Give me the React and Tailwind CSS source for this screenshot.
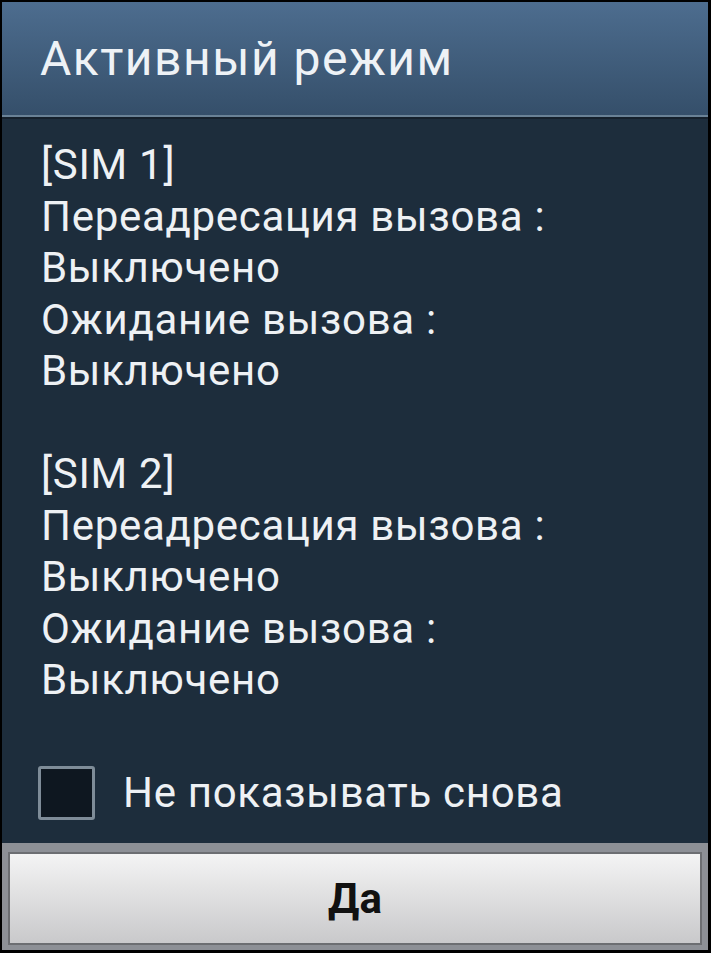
import React from 'react';

const lines = [
  '[SIM 1]',
  'Переадресация вызова :',
  'Выключено',
  'Ожидание вызова :',
  'Выключено',
  '',
  '[SIM 2]',
  'Переадресация вызова :',
  'Выключено',
  'Ожидание вызова :',
  'Выключено',
];

export default function App() {
  return (
    <div
      className="w-[711px] h-[953px] bg-black pt-[2px] pl-[2px] pr-[3px] pb-[3px] flex flex-col"
      style={{ fontFamily: 'Roboto, "Noto Sans", sans-serif' }}
    >
      {/* header */}
      <div className="h-[113px] bg-gradient-to-b from-[#4d6d8f] to-[#354f6a] flex items-center pl-[38px]">
        <h1 className="text-[48px] text-[#eef2f6] leading-none tracking-[1.5px]">Активный режим</h1>
      </div>
      <div className="h-[2px] bg-[#6a8296]" />
      <div className="h-[2px] bg-[#15202b]" />

      {/* body */}
      <div className="flex-1 bg-[#1d2d3c] flex flex-col">
        <div className="pt-[20px] pl-[39px] text-[42px] leading-[51.5px] tracking-[0.7px] text-[#eef1f4]">
          {lines.map((l, i) => (
            <div key={i} className="h-[51.5px] whitespace-nowrap">{l}</div>
          ))}
        </div>
        <div className="mt-auto flex items-center pl-[36px] pb-[23px]">
          <div className="w-[57px] h-[54px] border-[3px] border-[#7e8c98] rounded-[3px] bg-[#0e1720]" />
          <span className="ml-[28px] text-[42px] tracking-[0.7px] text-[#eef1f4] leading-none">Не показывать снова</span>
        </div>
      </div>

      {/* button bar */}
      <div className="h-[107px] bg-[#8d9096] pt-[9px] px-[6px] pb-[5px] flex">
        <button className="flex-1 border-2 border-[#6c6e72] bg-gradient-to-b from-[#f4f4f4] to-[#c9c9cb] flex items-center justify-center">
          <span className="text-[42px] font-bold text-[#111] leading-none">Да</span>
        </button>
      </div>
    </div>
  );
}
